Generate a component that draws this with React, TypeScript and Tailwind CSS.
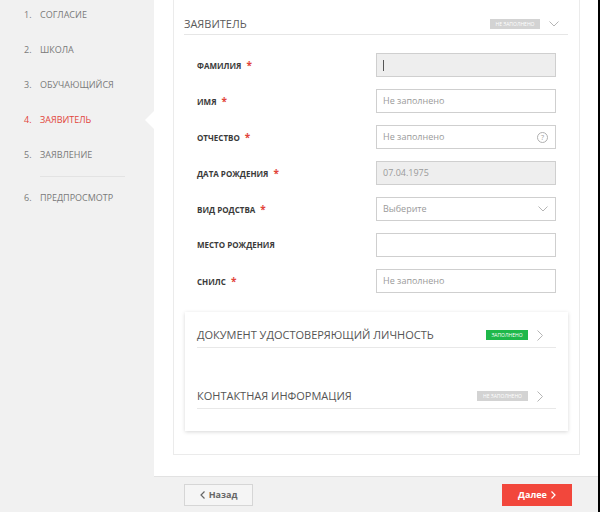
const steps = [
  { n: '1.', label: 'СОГЛАСИЕ' },
  { n: '2.', label: 'ШКОЛА' },
  { n: '3.', label: 'ОБУЧАЮЩИЙСЯ' },
  { n: '4.', label: 'ЗАЯВИТЕЛЬ', active: true },
  { n: '5.', label: 'ЗАЯВЛЕНИЕ' },
];

type Field = {
  label: string;
  required?: boolean;
  kind: 'text' | 'disabled' | 'select' | 'help' | 'caret';
  value?: string;
  placeholder?: string;
};

const fields: Field[] = [
  { label: 'ФАМИЛИЯ', required: true, kind: 'caret' },
  { label: 'ИМЯ', required: true, kind: 'text', placeholder: 'Не заполнено' },
  { label: 'ОТЧЕСТВО', required: true, kind: 'help', placeholder: 'Не заполнено' },
  { label: 'ДАТА РОЖДЕНИЯ', required: true, kind: 'disabled', value: '07.04.1975' },
  { label: 'ВИД РОДСТВА', required: true, kind: 'select', placeholder: 'Выберите' },
  { label: 'МЕСТО РОЖДЕНИЯ', kind: 'text' },
  { label: 'СНИЛС', required: true, kind: 'text', placeholder: 'Не заполнено' },
];

function ChevronDown() {
  return (
    <svg width="10" height="6" viewBox="0 0 10 6" className="shrink-0">
      <polyline points="0.5,0.5 5,5 9.5,0.5" fill="none" stroke="#b5b5b5" strokeWidth="1" />
    </svg>
  );
}

function ChevronRight() {
  return (
    <svg width="6" height="11" viewBox="0 0 6 11" className="shrink-0">
      <polyline points="0.5,0.5 5.5,5.5 0.5,10.5" fill="none" stroke="#b5b5b5" strokeWidth="1" />
    </svg>
  );
}

function FieldInput({ f }: { f: Field }) {
  const grey = f.kind === 'disabled' || f.kind === 'caret';
  return (
    <div
      className={`flex h-[24px] w-[180px] items-center justify-between border border-[#cfcfcf] pl-[6px] pr-[7px] text-[9px] ${
        grey ? 'bg-[#eeeeee]' : 'bg-white'
      }`}
    >
      {f.kind === 'caret' && <span className="h-[11px] w-px bg-[#555]" />}
      <span className="text-[#9a9a9a]">{f.value ?? f.placeholder ?? ''}</span>
      {f.kind === 'select' && <ChevronDown />}
      {f.kind === 'help' && (
        <span className="flex h-[11px] w-[11px] items-center justify-center rounded-full border border-[#b0b0b0] text-[7px] leading-none text-[#a0a0a0]">
          ?
        </span>
      )}
    </div>
  );
}

function Badge({ filled, className = '' }: { filled?: boolean; className?: string }) {
  return (
    <span
      className={`flex h-[10px] items-center justify-center text-[5px] leading-none text-white ${
        filled ? 'bg-[#1fb84a]' : 'bg-[#d3d3d3]'
      } ${className}`}
    >
      {filled ? 'ЗАПОЛНЕНО' : 'НЕ ЗАПОЛНЕНО'}
    </span>
  );
}

export default function App() {
  return (
    <div className="flex h-[512px] w-[600px] overflow-hidden border-r-2 border-black font-['Open_Sans',sans-serif]">
      <aside className="relative w-[154px] shrink-0 bg-[#f1f1f1] pl-6 pt-[5px]">
        <ul className="flex flex-col gap-[15px]">
          {steps.map(s => (
            <li
              key={s.n}
              className={`flex h-[20px] items-center text-[9px] ${s.active ? 'text-[#e2453b]' : 'text-[#7a7a7a]'}`}
            >
              <span className="w-[16px]">{s.n}</span>
              {s.label}
            </li>
          ))}
        </ul>
        <div className="ml-[16px] mt-[11px] h-px w-[85px] bg-[#e3e3e3]" />
        <div className="mt-[11px] flex h-[20px] items-center text-[9px] text-[#7a7a7a]">
          <span className="w-[16px]">6.</span>
          ПРЕДПРОСМОТР
        </div>
        <span className="absolute right-0 top-[111px] h-0 w-0 border-y-[9px] border-r-[9px] border-y-transparent border-r-white" />
      </aside>

      <div className="flex flex-1 flex-col">
        <main className="flex-1 bg-white pb-[21px] pl-[19px] pr-[18px]">
          <section className="h-full border border-t-0 border-[#ebebeb] pb-[22px] pt-[14px]">
            <div className="ml-[10px] mr-[11px] flex h-[21px] items-center justify-between border-b border-[#e6e6e6]">
              <span className="text-[11px] text-[#5a5a5a]">ЗАЯВИТЕЛЬ</span>
              <div className="flex items-center">
                <Badge className="w-[50px]" />
                <span className="ml-[9px] mr-[9px]">
                  <ChevronDown />
                </span>
              </div>
            </div>

            <div className="mt-[18px] flex flex-col gap-[12px] pl-[23px] pr-[23px]">
              {fields.map(f => (
                <div key={f.label} className="flex h-[24px] items-center">
                  <span className="w-[179px] text-[8px] font-bold text-[#3a3a3a]">
                    {f.label}
                    {f.required && <span className="ml-[5px] text-[10px] text-[#e2453b]">*</span>}
                  </span>
                  <FieldInput f={f} />
                </div>
              ))}
            </div>

            <div className="mx-[11px] mt-[19px] h-[119px] bg-white px-[12px] pt-[11px] shadow-[0_1px_4px_rgba(0,0,0,0.16)]">
              <div className="flex h-[25px] items-center justify-between border-b border-[#e8e8e8]">
                <span className="text-[11px] text-[#555]">ДОКУМЕНТ УДОСТОВЕРЯЮЩИЙ ЛИЧНОСТЬ</span>
                <div className="flex items-center">
                  <Badge filled className="w-[42px]" />
                  <span className="ml-[9px] mr-[13px]">
                    <ChevronRight />
                  </span>
                </div>
              </div>
              <div className="mt-[36px] flex h-[25px] items-center justify-between border-b border-[#e8e8e8]">
                <span className="text-[11px] text-[#555]">КОНТАКТНАЯ ИНФОРМАЦИЯ</span>
                <div className="flex items-center">
                  <Badge className="w-[51px]" />
                  <span className="ml-[9px] mr-[13px]">
                    <ChevronRight />
                  </span>
                </div>
              </div>
            </div>
          </section>
        </main>

        <footer className="flex h-[36px] shrink-0 items-center justify-between border-t border-[#e2e2e2] bg-[#f1f1f1] pl-[30px] pr-[26px]">
          <button className="flex h-[22px] w-[69px] items-center justify-center gap-[4px] border border-[#d6d6d6] bg-[#f5f5f5] text-[9px] font-bold text-[#666]">
            <svg width="5" height="8" viewBox="0 0 5 8">
              <polyline points="4.5,0.5 1,4 4.5,7.5" fill="none" stroke="#666" strokeWidth="1.2" />
            </svg>
            Назад
          </button>
          <button className="flex h-[22px] w-[70px] items-center justify-center gap-[4px] bg-[#f2473c] text-[9px] font-bold text-white">
            Далее
            <svg width="5" height="8" viewBox="0 0 5 8">
              <polyline points="0.5,0.5 4,4 0.5,7.5" fill="none" stroke="#fff" strokeWidth="1.2" />
            </svg>
          </button>
        </footer>
      </div>
    </div>
  );
}
